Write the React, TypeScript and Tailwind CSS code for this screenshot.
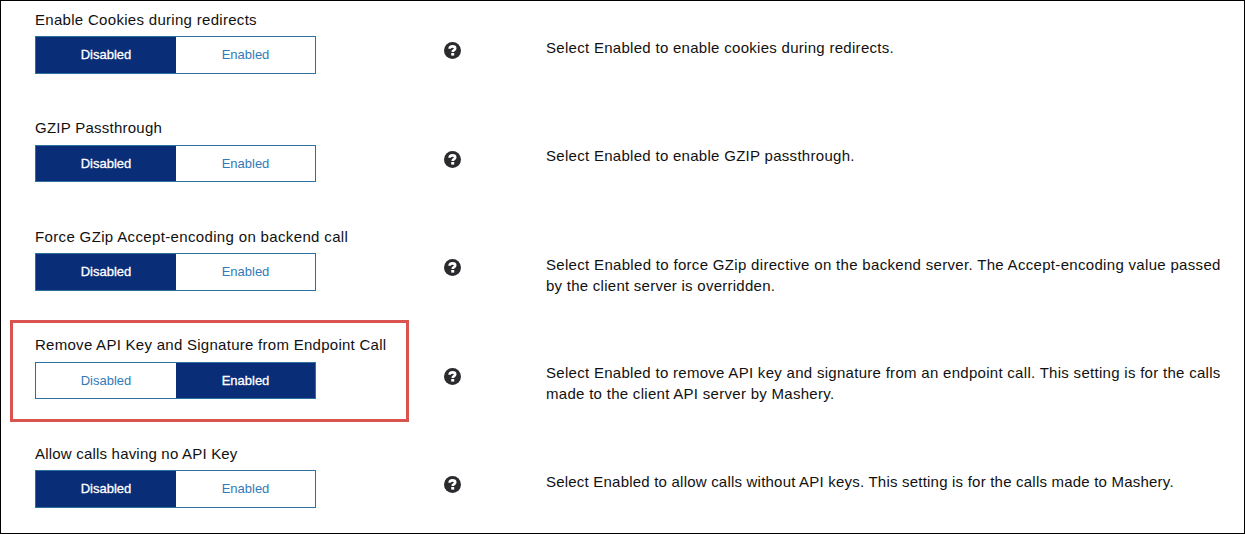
type Line = { text: string; tracking: string };
type Setting = { label: Line; enabled?: boolean; highlighted?: boolean; help: Line[] };

const settings: Setting[] = [
  {
    label: { text: "Enable Cookies during redirects", tracking: "tracking-[0.3px]" },
    help: [{ text: "Select Enabled to enable cookies during redirects.", tracking: "tracking-[0.29px]" }],
  },
  {
    label: { text: "GZIP Passthrough", tracking: "tracking-[0.25px]" },
    help: [{ text: "Select Enabled to enable GZIP passthrough.", tracking: "tracking-[0.29px]" }],
  },
  {
    label: { text: "Force GZip Accept-encoding on backend call", tracking: "tracking-[0.35px]" },
    help: [
      {
        text: "Select Enabled to force GZip directive on the backend server. The Accept-encoding value passed",
        tracking: "tracking-[0.315px]",
      },
      { text: "by the client server is overridden.", tracking: "tracking-[0.26px]" },
    ],
  },
  {
    label: { text: "Remove API Key and Signature from Endpoint Call", tracking: "tracking-[0.275px]" },
    enabled: true,
    highlighted: true,
    help: [
      {
        text: "Select Enabled to remove API key and signature from an endpoint call. This setting is for the calls",
        tracking: "tracking-[0.29px]",
      },
      { text: "made to the client API server by Mashery.", tracking: "tracking-[0.29px]" },
    ],
  },
  {
    label: { text: "Allow calls having no API Key", tracking: "tracking-[0.2px]" },
    help: [
      {
        text: "Select Enabled to allow calls without API keys. This setting is for the calls made to Mashery.",
        tracking: "tracking-[0.21px]",
      },
    ],
  },
];

function HelpIcon() {
  return (
    <svg viewBox="0 0 17 17" className="size-[17px]" aria-hidden="true">
      <circle cx="8.5" cy="8.5" r="8.5" fill="#2b2b2f" />
      <path d="M5.6 6.8C5.7 5 6.8 4.4 8.5 4.4c1.7 0 2.7.7 2.7 2 0 1.8-2.5 1.6-2.5 3.5" fill="none" stroke="white" strokeWidth="2.6" />
      <rect x="7.2" y="11" width="3" height="2.6" fill="white" />
    </svg>
  );
}

function Toggle({ enabled }: { enabled?: boolean }) {
  const on = "bg-[#0a2d78] text-white [-webkit-text-stroke:0.3px_white]";
  const off = "bg-white text-[#337ab7]";
  return (
    <div className="mt-[6.3px] flex h-[37.7px] w-[281px] border border-[#2d6f9f] text-[13px]">
      <button className={`w-[140px] ${enabled ? off : on}`}>Disabled</button>
      <button className={`flex-1 ${enabled ? on : off}`}>Enabled</button>
    </div>
  );
}

function Row({ label, enabled, highlighted, help }: Setting) {
  return (
    <div className="relative flex h-[108.5px] shrink-0 pl-[34px]">
      {highlighted && <div className="absolute -top-[15px] left-[9px] h-[102px] w-[399px] border-[3px] border-[#d9534f]" />}
      <div className="w-[409px]">
        <div className={`h-5 leading-5 whitespace-nowrap ${label.tracking}`}>{label.text}</div>
        <Toggle enabled={enabled} />
      </div>
      <div className="w-[102px] pt-[32.3px]">
        <HelpIcon />
      </div>
      <div className="pt-[27px] leading-[21px] whitespace-nowrap">
        {help.map((line) => (
          <div key={line.text} className={line.tracking}>
            {line.text}
          </div>
        ))}
      </div>
    </div>
  );
}

export default function App() {
  return (
    <div className="flex h-[534px] w-[1245px] flex-col overflow-hidden border border-black bg-white pt-[8.9px] font-['Liberation_Sans',Arial,sans-serif] text-[15px] text-[#111111]">
      {settings.map((s) => (
        <Row key={s.label.text} {...s} />
      ))}
    </div>
  );
}
